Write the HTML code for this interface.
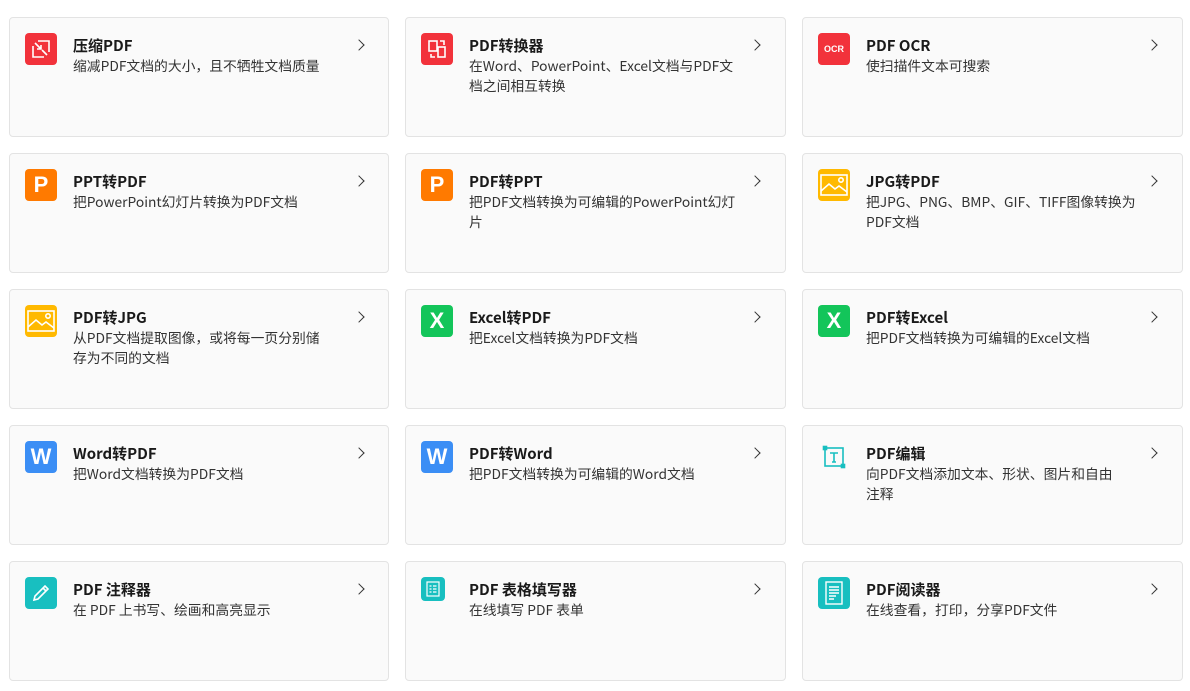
<html><head><style>
body{margin:0;background:#fff;font-family:"Noto Sans CJK SC","Liberation Sans",sans-serif;width:1190px;height:691px;overflow:hidden}
.g{position:absolute;left:9px;top:17px;display:grid;grid-template-columns:380px 381px 381px;column-gap:16px;row-gap:16px}
.c{position:relative;height:118px;background:#fafafa;border:1px solid #e3e3e3;border-radius:4px;box-sizing:content-box}
.i{position:absolute;left:15px;top:15px;width:32px;height:32px;border-radius:4px;color:#fff;font:bold 22px "Liberation Sans",sans-serif;display:flex;align-items:center;justify-content:center}
.t{position:absolute;left:63px;top:18px;font-size:15px;font-weight:bold;color:#1a1a1a;line-height:20px}
.d{position:absolute;left:63px;top:37px;width:300px;font-size:13.8px;color:#333;line-height:20px;white-space:nowrap}
.a{position:absolute;left:345px;top:23px;width:7px;height:7px;border-right:1.6px solid #333;border-top:1.6px solid #333;transform:rotate(45deg)}
.r{background:#f2323b}.o{background:#ff7a00}.y{background:#ffb900}.gr{background:#13c55a}.b{background:#3b8ef5}.te{background:#18bfc0}
</style></head><body><div class="g">
<div class="c"><div class="i r"><svg width="22" height="22" viewBox="0 0 22 22" fill="none" stroke="#fff" stroke-width="1.6"><path d="M3 8V19H14M8 3H19V14M5 5L11 11M11 7V11H7M17 17L12 12"/></svg></div><div class="t">压缩PDF</div><div class="d">缩减PDF文档的大小，且不牺牲文档质量</div><div class="a"></div></div>
<div class="c"><div class="i r"><svg width="22" height="22" viewBox="0 0 22 22" fill="none" stroke="#fff" stroke-width="1.6"><rect x="3" y="3" width="8" height="10"/><rect x="12" y="9" width="7" height="10"/><path d="M14 3h4v4M5 16v3h4"/></svg></div><div class="t">PDF转换器</div><div class="d">在Word、PowerPoint、Excel文档与PDF文<br>档之间相互转换</div><div class="a"></div></div>
<div class="c"><div class="i r" style="font-size:9px">OCR</div><div class="t">PDF OCR</div><div class="d">使扫描件文本可搜索</div><div class="a"></div></div>
<div class="c"><div class="i o">P</div><div class="t">PPT转PDF</div><div class="d">把PowerPoint幻灯片转换为PDF文档</div><div class="a"></div></div>
<div class="c"><div class="i o">P</div><div class="t">PDF转PPT</div><div class="d">把PDF文档转换为可编辑的PowerPoint幻灯<br>片</div><div class="a"></div></div>
<div class="c"><div class="i y"><svg width="28" height="24" viewBox="0 0 28 24" fill="none" stroke="#fff" stroke-width="1.6"><rect x="1" y="2" width="26" height="20"/><path d="M1 18l8-7 6 5 4-3 8 6"/><circle cx="21" cy="7" r="2.2"/></svg></div><div class="t">JPG转PDF</div><div class="d">把JPG、PNG、BMP、GIF、TIFF图像转换为<br>PDF文档</div><div class="a"></div></div>
<div class="c"><div class="i y"><svg width="28" height="24" viewBox="0 0 28 24" fill="none" stroke="#fff" stroke-width="1.6"><rect x="1" y="2" width="26" height="20"/><path d="M1 18l8-7 6 5 4-3 8 6"/><circle cx="21" cy="7" r="2.2"/></svg></div><div class="t">PDF转JPG</div><div class="d">从PDF文档提取图像，或将每一页分别储<br>存为不同的文档</div><div class="a"></div></div>
<div class="c"><div class="i gr">X</div><div class="t">Excel转PDF</div><div class="d">把Excel文档转换为PDF文档</div><div class="a"></div></div>
<div class="c"><div class="i gr">X</div><div class="t">PDF转Excel</div><div class="d">把PDF文档转换为可编辑的Excel文档</div><div class="a"></div></div>
<div class="c"><div class="i b">W</div><div class="t">Word转PDF</div><div class="d">把Word文档转换为PDF文档</div><div class="a"></div></div>
<div class="c"><div class="i b">W</div><div class="t">PDF转Word</div><div class="d">把PDF文档转换为可编辑的Word文档</div><div class="a"></div></div>
<div class="c"><div class="i" style="background:none"><svg width="24" height="24" viewBox="0 0 24 24" fill="none" stroke="#18bfc0" stroke-width="1.6"><rect x="3" y="3" width="18" height="18"/><path d="M8 8h8M12 8v9M10 17h4"/><rect x="1.5" y="1.5" width="3" height="3" fill="#18bfc0"/><rect x="19.5" y="19.5" width="3" height="3" fill="#18bfc0"/></svg></div><div class="t">PDF编辑</div><div class="d">向PDF文档添加文本、形状、图片和自由<br>注释</div><div class="a"></div></div>
<div class="c"><div class="i te"><svg width="22" height="22" viewBox="0 0 22 22" fill="none" stroke="#fff" stroke-width="1.6"><path d="M4 18l1-4L15 4l3 3L8 17z M13 6l3 3"/></svg></div><div class="t">PDF 注释器</div><div class="d">在 PDF 上书写、绘画和高亮显示</div><div class="a"></div></div>
<div class="c"><div class="i te" style="width:24px;height:24px"><svg width="14" height="16" viewBox="0 0 14 16" fill="none" stroke="#fff" stroke-width="1.2"><rect x="1" y="1" width="12" height="14"/><path d="M3.5 5h2M3.5 8h2M3.5 11h2M7 5h3.5M7 8h3.5M7 11h3.5"/></svg></div><div class="t">PDF 表格填写器</div><div class="d">在线填写 PDF 表单</div><div class="a"></div></div>
<div class="c"><div class="i te"><svg width="20" height="24" viewBox="0 0 20 24" fill="none" stroke="#fff" stroke-width="1.4"><rect x="2" y="1" width="16" height="22"/><path d="M5 6h10M5 9h10M5 12h10M5 15h7M5 18h5"/></svg></div><div class="t">PDF阅读器</div><div class="d">在线查看，打印，分享PDF文件</div><div class="a"></div></div>
</div></body></html>
